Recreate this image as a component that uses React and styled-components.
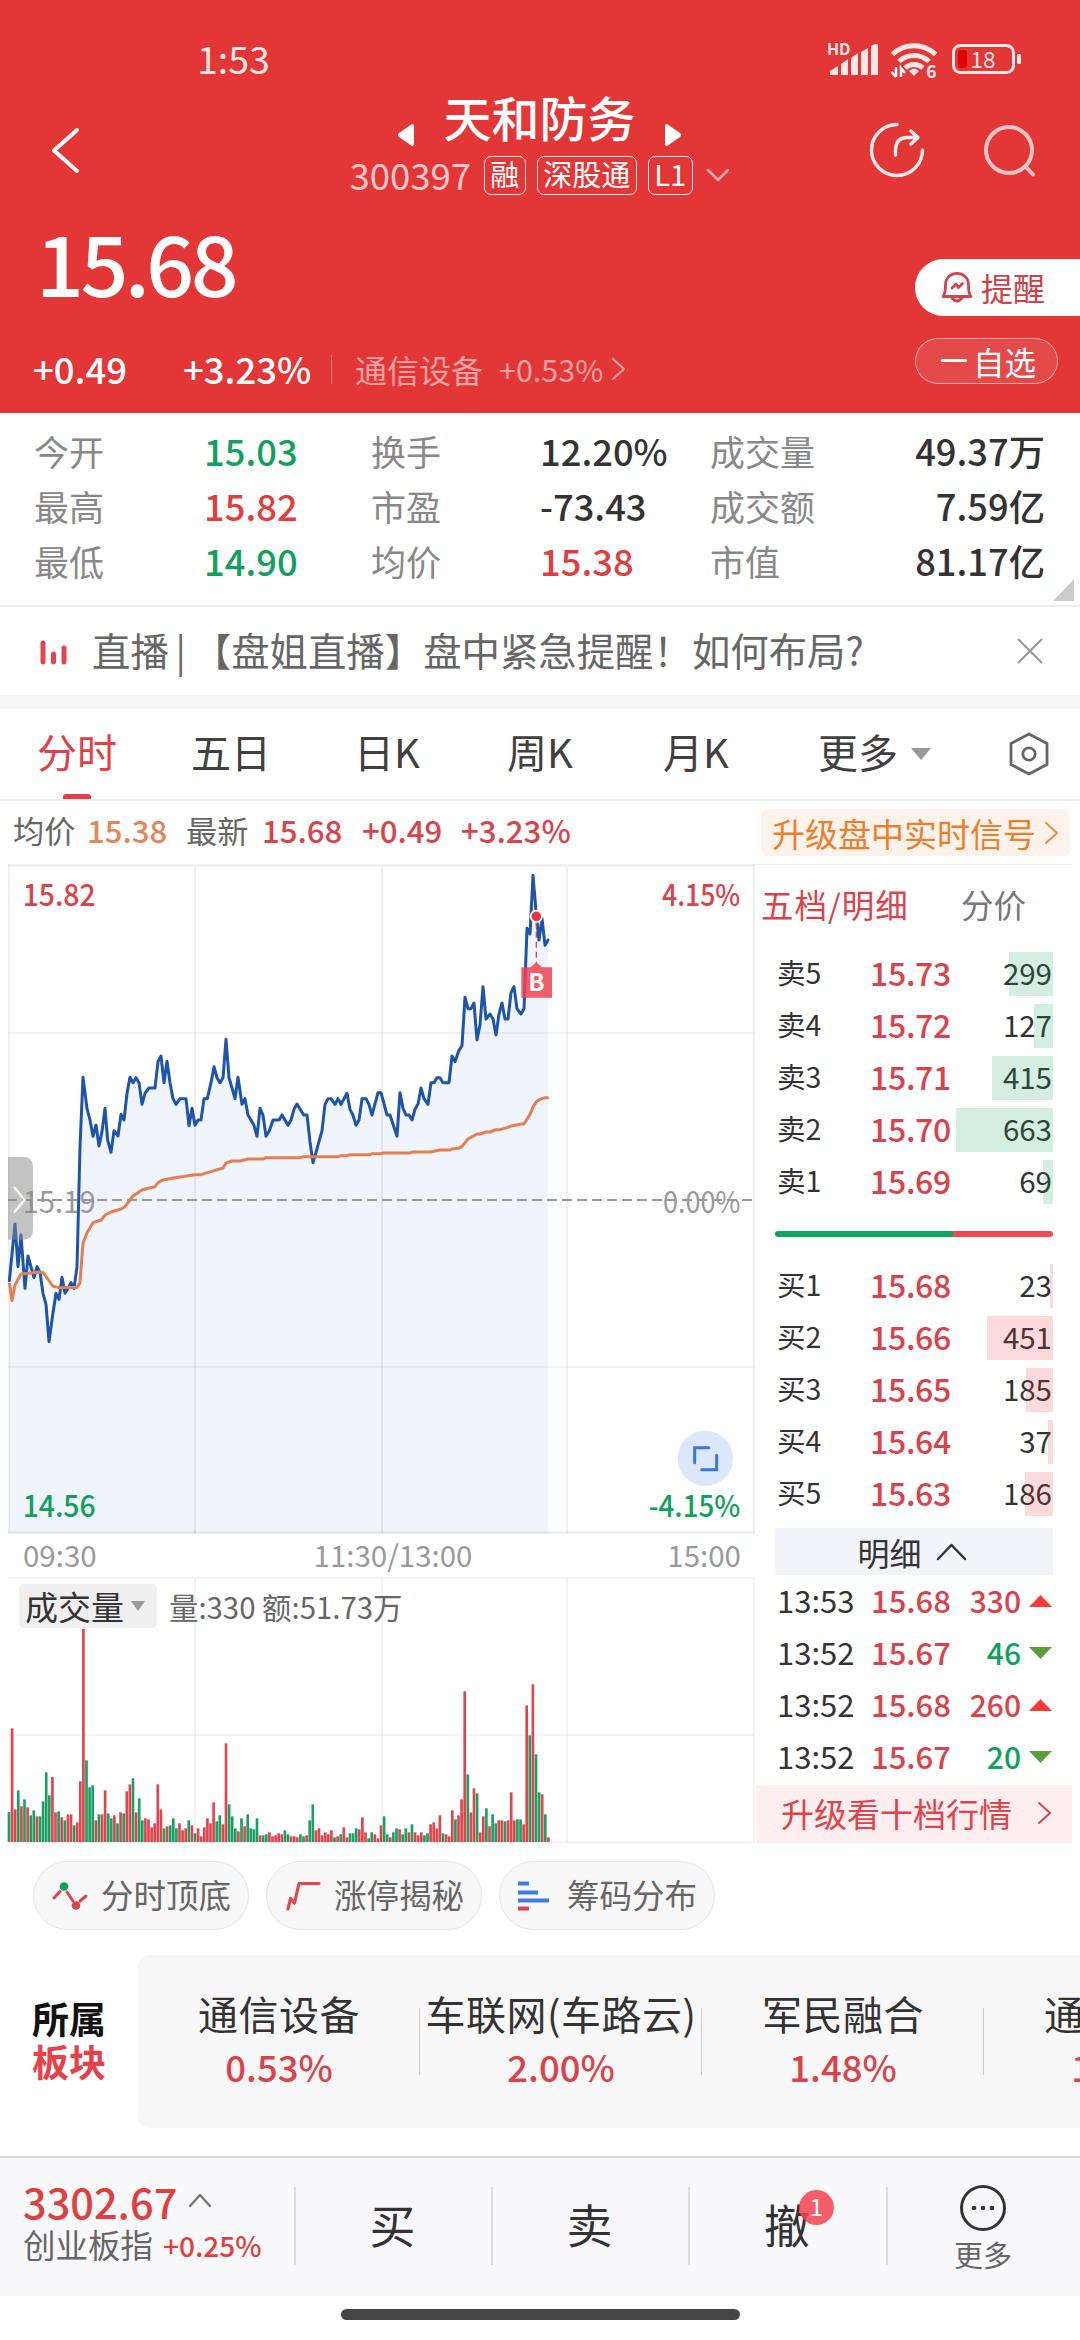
import React from 'react';
import styled, { createGlobalStyle, css } from 'styled-components';

const RED = '#d9434b';
const GREEN = '#12a05e';

const GlobalStyle = createGlobalStyle`
  * {
    box-sizing: border-box;
  }
  body {
    margin: 0;
    background: #fff;
    font-family: 'Noto Sans CJK SC', 'Noto Sans', sans-serif;
    color: #333;
    line-height: 1;
    white-space: nowrap;
  }
  svg {
    display: block;
    flex: none;
    overflow: visible;
  }
`;

const stats = [
  ['今开', '15.03', GREEN, '换手', '12.20%', '#333', '成交量', '49.37万'],
  ['最高', '15.82', '#e03f3f', '市盈', '-73.43', '#333', '成交额', '7.59亿'],
  ['最低', '14.90', GREEN, '均价', '15.38', '#e03f3f', '市值', '81.17亿'],
];

const asks = [
  ['卖5', '15.73', 299, 44],
  ['卖4', '15.72', 127, 19],
  ['卖3', '15.71', 415, 61],
  ['卖2', '15.70', 663, 97],
  ['卖1', '15.69', 69, 10],
];

const bids = [
  ['买1', '15.68', 23, 3],
  ['买2', '15.66', 451, 66],
  ['买3', '15.65', 185, 27],
  ['买4', '15.64', 37, 5],
  ['买5', '15.63', 186, 28],
];

const trades = [
  ['13:53', '15.68', 330, true],
  ['13:52', '15.67', 46, false],
  ['13:52', '15.68', 260, true],
  ['13:52', '15.67', 20, false],
];

const sectors = [
  ['通信设备', '0.53%'],
  ['车联网(车路云)', '2.00%'],
  ['军民融合', '1.48%'],
  ['通信服务', '1.12%'],
];

//Chart units: 3 units = 1px
const pricePoints =
  '28,1262 45,1092 54,1220 63,1125 75,1285 84,1188 102,1253 111,1220 120,1237 129,1300 138,1333 147,1445 158,1365 168,1300 177,1318 186,1252 195,1300 204,1285 213,1268 222,1285 231,1220 240,860 249,652 261,745 270,780 279,829 288,795 297,858 306,815 315,745 323,840 333,877 342,812 354,828 363,763 372,780 381,700 390,652 399,668 408,653 417,668 426,733 435,700 447,684 465,684 474,605 483,588 492,668 501,604 510,668 519,716 528,733 540,716 558,716 567,797 576,745 585,796 594,780 603,780 612,716 622,716 633,668 642,620 651,653 660,668 669,653 678,538 687,653 696,684 705,716 714,652 726,733 735,716 744,765 762,796 771,829 780,745 789,765 798,829 808,812 819,780 837,780 846,765 864,796 873,780 882,748 891,732 911,765 921,765 930,845 939,908 948,877 966,812 975,733 984,716 993,716 1005,733 1014,716 1023,733 1041,700 1050,748 1059,765 1068,796 1077,780 1086,716 1098,716 1107,733 1116,765 1134,698 1143,698 1161,765 1170,765 1191,829 1200,698 1209,745 1218,765 1227,765 1236,780 1245,748 1254,732 1263,684 1272,716 1284,733 1293,668 1302,668 1311,653 1320,653 1329,668 1347,668 1356,588 1365,605 1376,573 1386,557 1395,412 1404,446 1413,446 1422,429 1431,540 1440,495 1449,380 1458,477 1470,462 1479,477 1488,525 1497,462 1506,429 1515,477 1524,477 1533,398 1542,380 1551,446 1563,462 1572,446 1581,205 1590,222 1599,46 1609,165 1617,240 1626,175 1635,256 1644,240';
const averagePoints =
  '28,1268 36,1322 45,1275 63,1242 120,1236 130,1238 140,1252 158,1278 177,1283 231,1282 240,1268 249,1150 261,1118 279,1088 303,1080 318,1063 333,1056 363,1047 375,1040 399,1008 426,990 447,984 465,980 474,968 486,961 520,954 585,944 603,944 642,932 669,924 678,909 696,903 720,903 744,897 790,897 798,893 900,893 912,890 1014,890 1023,887 1041,887 1050,884 1110,884 1117,881 1143,881 1150,879 1230,879 1236,876 1293,876 1305,873 1320,870 1350,870 1356,867 1374,865 1386,859 1404,837 1431,822 1440,822 1458,816 1470,816 1488,809 1500,809 1524,802 1533,798 1563,792 1572,792 1590,763 1599,742 1609,725 1620,718 1635,713 1646,713';

//r = up minute, g = down minute, the number is the bar height
const volumes =
  'g90 r341 r98 g155 r107 g128 r104 g80 g95 r77 g77 g122 g209 g140 r195 r89 g92 r74 g65 r83 r83 g50 r59 r182 r639 g245 g164 g170 r65 g83 r83 r155 g86 g71 r80 g56 r89 g86 r152 r173 g191 r89 g131 g65 r71 r68 r44 r56 r173 r98 g41 r47 g50 g71 g41 r56 r35 r41 g65 r50 g26 r41 r17 r44 r71 r56 r119 g62 g80 r53 r296 g113 g77 g41 r32 g71 r47 g83 g41 g38 g71 r20 g20 g23 r29 r17 r20 r26 r23 g35 g23 r17 r17 r14 g23 g17 r20 g65 g113 r35 r41 r20 r29 r23 r35 g14 r17 g23 r44 r14 g26 g26 g41 r38 r74 r29 g11 g29 r23 r11 r50 g77 g23 r14 g29 g41 r38 g23 g41 r29 g53 r29 r20 r29 g20 g26 r53 r59 r41 r80 g26 r23 r17 r95 g68 r80 r128 r452 g203 r89 r161 g146 r29 r77 g101 r47 g83 g56 r65 r65 g62 r65 r149 r65 g68 g68 r53 r410 g320 r473 g263 g149 r143 g83 r14'.split(
    ' '
  );

const Chevron = ({ dir, w, h, color, weight }) => {
  const d = {
    left: `M${w - 2} 2 L2 ${h / 2} L${w - 2} ${h - 2}`,
    right: `M2 2 L${w - 2} ${h / 2} L2 ${h - 2}`,
    up: `M2 ${h - 2} L${w / 2} 2 L${w - 2} ${h - 2}`,
    down: `M2 2 L${w / 2} ${h - 2} L${w - 2} 2`,
  }[dir];
  return (
    <svg width={w} height={h} fill='none' stroke={color} strokeWidth={weight || 2}>
      <path d={d} strokeLinecap='round' strokeLinejoin='round' />
    </svg>
  );
};

const StatusIcons = () => (
  <svg width='196' height='40' viewBox='826 40 196 40' fill='#fff' fillOpacity='.88'>
    <text x='827' y='54.5' fontSize='16' fontWeight='700'>HD</text>
    <path d='M830 75v-4l8-5v9zM841 75V64l7-5v16zM851 75V58l7-5v22zM861 75V52l7-4v27zM871 75V46l4-2h3v31z' />
    <g fill='none' stroke='#fff' strokeOpacity='.88' strokeWidth='5'>
      <path d='M892.500 54.500a31 31 0 0 1 43 0M899 61.500a22 22 0 0 1 30 0M905 68a13 13 0 0 1 18 0' />
    </g>
    <path d='M914 76l-5-5q5-5 10 0z' />
    <path d='M896 67v10M891.500 72l4.500 5M901 77v-9l4 5' stroke='#fff' strokeWidth='2.500' fill='none' />
    <text x='926' y='77.500' fontSize='18' fontWeight='700'>6</text>
    <rect x='953.500' y='45.500' width='60' height='27' rx='7' fill='none' stroke='#fff' strokeOpacity='.88' strokeWidth='3' />
    <rect x='958' y='50' width='9' height='18' rx='3' fill='#e20000' fillOpacity='1' />
    <rect x='1017' y='54' width='4' height='10' rx='1.500' />
    <text x='970.500' y='67.500' fontSize='22.500'>18</text>
  </svg>
);

const ShareIcon = () => (
  <svg width='58' height='58' viewBox='-29 -29 58 58' fill='none' stroke='#fff' strokeOpacity='.9' strokeWidth='3.400' strokeLinecap='round'>
    <path d='M0 -25.500A25.500 25.500 0 1 0 25.500 0' />
    <path d='M-1.500 5V0Q-1.500 -12 10 -12.500H20M14 -19L21 -12.500L14 -6' strokeLinejoin='round' />
  </svg>
);

const SearchIcon = () => (
  <svg width='58' height='58' viewBox='-29 -29 58 58' fill='none' stroke='#f3c4c4' strokeWidth='4' strokeLinecap='round'>
    <circle cx='0' cy='0' r='23' />
    <path d='M17 17L24 24.500' />
  </svg>
);

const BellIcon = () => (
  <svg width='32' height='32' viewBox='0 0 32 32' fill='none' stroke='#d2434a' strokeWidth='2.800' strokeLinecap='round' strokeLinejoin='round'>
    <path d='M2 25.500C4 23 4.500 20 4.500 14C4.500 -1.500 27.500 -1.500 27.500 14C27.500 20 28 23 30 25.500Z' />
    <path d='M11 17l4-4 2.500 3.500 4-4' />
    <path d='M11 27q5 6 10 0' />
  </svg>
);

const GearIcon = () => (
  <svg width='42' height='44' viewBox='0 0 42 44' fill='none' stroke='#666' strokeWidth='2.800'>
    <path d='M21 2L39 11.500V32.500L21 42L3 32.500V11.500Z' strokeLinejoin='round' />
    <circle cx='21' cy='22' r='6.200' />
  </svg>
);

const PeakIcon = () => (
  <svg width='36' height='30' viewBox='0 0 36 30' fill='none' stroke={RED} strokeWidth='3'>
    <path d='M2 17L8 10.500M15 11L21 20M28 20L34 15' strokeLinecap='round' />
    <circle cx='12' cy='5.500' r='4.300' fill={GREEN} stroke='none' />
    <circle cx='24' cy='24.500' r='4.300' fill={RED} stroke='none' />
  </svg>
);

const LimitIcon = () => (
  <svg width='36' height='30' viewBox='0 0 36 30' fill='none' stroke='#e5444f' strokeWidth='3.200'>
    <path d='M3 28L5.500 17.500L9.500 22L14 2.500H34' strokeLinecap='round' strokeLinejoin='round' />
  </svg>
);

const ChipIcon = () => (
  <svg width='32' height='30' viewBox='0 0 32 30'>
    <path d='M0 2.500h11M0 11.500h20M0 19.500h31' stroke='#3f7be0' strokeWidth='4' />
    <path d='M0 27.500h11' stroke={RED} strokeWidth='4' />
  </svg>
);

const AxisText = ({ x, y, len, color, weight, children }) => (
  <text
    x={x}
    y={y}
    fontSize='90'
    fontWeight={weight || 500}
    fill={color}
    textLength={len}
    lengthAdjust='spacingAndGlyphs'
  >
    {children}
  </text>
);

const PriceChart = () => (
  <svg width='748' height='670' viewBox='24 12 2244 2010' fill='none'>
    <path d={`M28 2022L${pricePoints.replace(/ /g, 'L')}L1644 2022Z`} fill='#eff4fd' />
    <g stroke='#000' strokeOpacity='.07' strokeWidth='5'>
      <path d='M27 12V2020M585 20V2022M1146 20V2022M1701 20V2022M2262 12V2020' />
      <path d='M24 519H2262M24 1521H2262' />
      <path d='M24 16H2265M24 2017H2265' strokeWidth='7' />
    </g>
    <path d='M24 1020H2262' stroke='#999' strokeWidth='6' strokeDasharray='30 15' strokeDashoffset='3' />
    <AxisText x={68} y={1058} len={219} color='#999' weight={400}>15.19</AxisText>
    <AxisText x={1989} y={1058} len={232} color='#999' weight={400}>0.00%</AxisText>
    <polyline points={pricePoints} stroke='#1f54ab' strokeWidth='9' strokeLinejoin='round' strokeLinecap='round' />
    <polyline points={averagePoints} stroke='#e57f50' strokeWidth='9' strokeLinejoin='round' />
    <AxisText x={68} y={138} len={219} color={RED}>15.82</AxisText>
    <AxisText x={1986} y={138} len={235} color={RED}>4.15%</AxisText>
    <AxisText x={68} y={1970} len={219} color={GREEN}>14.56</AxisText>
    <AxisText x={1946} y={1970} len={275} color={GREEN}>-4.15%</AxisText>
    <path d='M1609 185V310' stroke={RED} strokeWidth='4' strokeDasharray='18 12' />
    <circle cx='1609' cy='169' r='17' fill='#ea3440' stroke='#fff' strokeWidth='5' />
    <path d='M1564 322H1592L1609 307L1626 322H1656V413H1564Z' fill='#ee4250' fillOpacity='.85' />
    <text x='1609' y='394' fontSize='72' fontWeight='700' textAnchor='middle' fill='#fff'>B</text>
    <circle cx='2116' cy='1795' r='83' fill='#dde7fb' />
    <path d='M2084 1808V1763H2126M2105 1829H2150V1786' stroke='#3b76da' strokeWidth='9' strokeLinecap='round' />
    <path d='M24 891H70Q99 891 99 920V1110Q99 1139 70 1139H24Z' fill='#888' fillOpacity='.5' />
    <path d='M44 983L74 1020L44 1055' stroke='#fff' strokeWidth='7' strokeLinecap='round' />
  </svg>
);

const VolumeChart = () => (
  <svg width='748' height='266' viewBox='24 681 2244 798' fill='none'>
    <g stroke='#000' strokeOpacity='.06' strokeWidth='5'>
      <path d='M585 684V1476M1146 684V1476M1701 684V1476M2262 684V1476' />
      <path d='M24 684H2265M24 1155H2262M24 1477H2265' />
    </g>
    {volumes.map((v, i) => {
      const h = Number(v.slice(1));
      return (
        <rect
          key={i}
          x={27 + i * 9.3 - 4}
          y={1476 - h}
          width='8'
          height={h}
          fill={v[0] === 'r' ? '#e0454e' : '#1ba064'}
        />
      );
    })}
  </svg>
);

const App = () => (
  <Page>
    <GlobalStyle />
    <Header>
      <StatusBar>
        <Clock>1:53</Clock>
        <StatusIcons />
      </StatusBar>
      <NavBar>
        <Chevron dir='left' w={27} h={45} color='#fff' weight={4} />
        <Titles>
          <TitleRow>
            <svg width='16' height='22' fill='#fff'>
              <path d='M14 0q2 0 2 2v18q0 2-2 2L1 13q-2-2 0-4z' />
            </svg>
            <Title>天和防务</Title>
            <svg width='16' height='22' fill='#fff'>
              <path d='M2 0q-2 0-2 2v18q0 2 2 2L15 13q2-2 0-4z' />
            </svg>
          </TitleRow>
          <CodeRow>
            <Code>300397</Code>
            <Tag>融</Tag>
            <Tag>深股通</Tag>
            <Tag>L1</Tag>
            <Chevron dir='down' w={24} h={14} color='#f5a9a9' weight={2.5} />
          </CodeRow>
        </Titles>
        <NavIcons>
          <ShareIcon />
          <SearchIcon />
        </NavIcons>
      </NavBar>
      <PriceRow>
        <BigPrice>15.68</BigPrice>
        <AlertButton>
          <BellIcon />
          提醒
        </AlertButton>
      </PriceRow>
      <ChangeRow>
        <Change $w={150}>+0.49</Change>
        <Change $w={146}>+3.23%</Change>
        <Industry>
          <span>通信设备</span>
          <IndustryRate>+0.53%</IndustryRate>
          <Chevron dir='right' w={15} h={24} color='#f5a3a3' />
        </Industry>
        <WatchButton>
          <Minus />
          自选
        </WatchButton>
      </ChangeRow>
    </Header>

    <Stats>
      {stats.map((s) => (
        <React.Fragment key={s[0]}>
          <StatLabel>{s[0]}</StatLabel>
          <StatValue $color={s[2]}>{s[1]}</StatValue>
          <StatLabel>{s[3]}</StatLabel>
          <StatValue $color={s[5]}>{s[4]}</StatValue>
          <StatLabel>{s[6]}</StatLabel>
          <StatValue $right>{s[7]}</StatValue>
        </React.Fragment>
      ))}
      <Corner />
    </Stats>

    <Banner>
      <svg width='28' height='22' stroke='#e5444f' strokeWidth='5' strokeLinecap='round'>
        <path d='M3 3V22M13.500 14V22M24 8V22' />
      </svg>
      <BannerText>
        直播<Bar>|</Bar>【盘姐直播】盘中紧急提醒！如何布局?
      </BannerText>
      <svg width='26' height='26' stroke='#999' strokeWidth='2.200'>
        <path d='M1 1L25 25M25 1L1 25' />
      </svg>
    </Banner>

    <Tabs>
      <Tab $active $w={154}>分时</Tab>
      <Tab $w={163}>五日</Tab>
      <Tab $w={153}>日K</Tab>
      <Tab $w={156}>周K</Tab>
      <Tab $w={155}>月K</Tab>
      <Tab $w={93}>更多</Tab>
      <Caret $w={20} $h={12} />
      <TabsEnd>
        <GearIcon />
      </TabsEnd>
    </Tabs>

    <InfoRow>
      <Info $w={74} $color='#666'>均价</Info>
      <Info $w={99} $color='#e0885a' $bold>15.38</Info>
      <Info $w={76} $color='#666'>最新</Info>
      <Info $w={100} $color={RED} $bold>15.68</Info>
      <Info $w={99} $color={RED} $bold>+0.49</Info>
      <Info $color={RED} $bold>+3.23%</Info>
      <SignalButton>
        升级盘中实时信号
        <Chevron dir='right' w={15} h={24} color='#ec8a45' />
      </SignalButton>
    </InfoRow>

    <Market>
      <Charts>
        <PriceChart />
        <Times>
          <span>09:30</span>
          <MidTime>11:30/13:00</MidTime>
          <span>15:00</span>
        </Times>
        <VolumeBox>
          <VolumeChart />
          <VolumeHead>
            <VolumeSelect>
              成交量
              <Caret $w={14} $h={10} />
            </VolumeSelect>
            量:330 额:51.73万
          </VolumeHead>
        </VolumeBox>
      </Charts>
      <Book>
        <BookTabs>
          <BookTab $active>五档/明细</BookTab>
          <BookTab>分价</BookTab>
        </BookTabs>
        <Levels>
          {asks.map(([name, price, vol, w]) => (
            <Level key={name}>
              <span>{name}</span>
              <LevelPrice>{price}</LevelPrice>
              <span>{vol}</span>
              <Depth $sell style={{ width: w }} />
            </Level>
          ))}
        </Levels>
        <Ratio />
        <Levels>
          {bids.map(([name, price, vol, w]) => (
            <Level key={name}>
              <span>{name}</span>
              <LevelPrice>{price}</LevelPrice>
              <span>{vol}</span>
              <Depth style={{ width: w }} />
            </Level>
          ))}
        </Levels>
        <DetailHead>
          明细
          <Chevron dir='up' w={31} h={18} color='#333' weight={2.5} />
        </DetailHead>
        {trades.map(([time, price, vol, up], i) => (
          <Trade key={i}>
            <TradeTime>{time}</TradeTime>
            <TradePrice>{price}</TradePrice>
            <TradeVolume $up={up}>{vol}</TradeVolume>
            <svg width='23' height='12' fill={up ? '#fb3a36' : '#5a9c3e'}>
              <path d={up ? 'M11.500 0L23 12H0Z' : 'M11.500 12L0 0H23Z'} />
            </svg>
          </Trade>
        ))}
        <Upgrade>
          升级看十档行情
          <Chevron dir='right' w={15} h={24} color={RED} />
        </Upgrade>
      </Book>
    </Market>

    <Pills>
      <Pill>
        <PeakIcon />
        <PillText>分时顶底</PillText>
      </Pill>
      <Pill>
        <LimitIcon />
        <PillText>涨停揭秘</PillText>
      </Pill>
      <Pill>
        <ChipIcon />
        <PillText>筹码分布</PillText>
      </Pill>
    </Pills>

    <SectorRow>
      <SectorLabel>
        所属
        <em>板块</em>
      </SectorLabel>
      <SectorCard>
        {sectors.map(([name, rate]) => (
          <Sector key={name}>
            <SectorName>{name}</SectorName>
            <SectorRate>{rate}</SectorRate>
          </Sector>
        ))}
      </SectorCard>
    </SectorRow>

    <Footer>
      <IndexBox>
        <IndexValue>
          3302.67
          <Chevron dir='up' w={24} h={15} color='#777' weight={2.5} />
        </IndexValue>
        <IndexName>
          创业板指
          <IndexRate>+0.25%</IndexRate>
        </IndexName>
      </IndexBox>
      <Action $w={197}>买</Action>
      <Action $w={197}>卖</Action>
      <Action $w={198}>
        撤<Badge>1</Badge>
      </Action>
      <More>
        <svg width='48' height='48' viewBox='-24 -24 48 48' fill='#333'>
          <circle r='21.500' fill='none' stroke='#333' strokeWidth='3' />
          <circle cx='-9' r='2.300' />
          <circle r='2.300' />
          <circle cx='9' r='2.300' />
        </svg>
        更多
      </More>
    </Footer>
    <HomeBar />
  </Page>
);

export default App;

const center = css`
  display: flex;
  align-items: center;
`;

const Page = styled.div`
  width: 1080px;
  height: 2340px;
  overflow: hidden;
  background: #fff;
`;
const Header = styled.header`
  height: 413px;
  background: #e33636;
  color: #fff;
`;
const StatusBar = styled.div`
  ${center}
  justify-content: space-between;
  height: 84px;
  padding: 36px 58px 0 197px;
`;
const Clock = styled.div`
  padding-bottom: 4px;
  font-size: 37.5px;
  opacity: 0.88;
`;
const NavBar = styled.div`
  ${center}
  justify-content: space-between;
  height: 132px;
  padding: 0 42px 0 52px;
`;
const Titles = styled.div`
  display: flex;
  flex-direction: column;
  width: 380px;
  margin: -12px 0 0 132px;
`;
const TitleRow = styled.div`
  display: flex;
  align-items: flex-end;
  justify-content: space-between;
  width: 284px;
  height: 62px;
  margin-left: 48px;
`;
const Title = styled.h1`
  margin: 0;
  padding-bottom: 6px;
  font-size: 48px;
  font-weight: 500;
`;
const CodeRow = styled.div`
  ${center}
  height: 58px;
`;
const Code = styled.div`
  width: 135px;
  color: #fbc9c9;
  font-size: 36.5px;
  line-height: 34px;
`;
const Tag = styled.span`
  height: 39px;
  margin-right: 11px;
  padding: 0 5.5px;
  border: 1.5px solid rgba(255, 255, 255, 0.85);
  border-radius: 7px;
  font-size: 29px;
  line-height: 33px;

  &:last-of-type {
    margin-right: 13px;
  }
`;
const NavIcons = styled.div`
  display: flex;
  gap: 54px;
`;
const PriceRow = styled.div`
  ${center}
  justify-content: space-between;
  height: 104px;
  padding-left: 36px;
`;
const BigPrice = styled.div`
  padding-bottom: 14px;
  font-size: 84px;
  font-weight: 500;
  letter-spacing: -3.5px;
`;
const AlertButton = styled.div`
  ${center}
  gap: 8px;
  width: 165px;
  height: 57px;
  margin-top: 38px;
  padding-left: 26px;
  border-radius: 29px 0 0 29px;
  background: #fff;
  color: #c9434a;
  font-size: 32px;
  line-height: 50px;
`;
const ChangeRow = styled.div`
  ${center}
  height: 84px;
  padding: 14px 22px 0 33px;
`;
const Change = styled.div`
  width: ${(p) => p.$w}px;
  font-size: 36.5px;
  font-weight: 500;
  line-height: 32px;
`;
const Industry = styled.div`
  ${center}
  height: 29px;
  margin-left: 2px;
  padding-left: 23px;
  border-left: 1.5px solid rgba(255, 255, 255, 0.35);
  color: #f5a3a3;
  font-size: 32px;
  line-height: 28px;
`;
const IndustryRate = styled.span`
  margin: 0 8px 0 16px;
  font-size: 30.5px;
`;
const WatchButton = styled.div`
  ${center}
  gap: 6px;
  width: 143px;
  height: 46px;
  margin: -17px 0 0 auto;
  padding-left: 25px;
  border: 1.5px solid rgba(255, 255, 255, 0.5);
  border-radius: 23px;
  background: rgba(255, 255, 255, 0.1);
  font-size: 31.5px;
  line-height: 38px;
`;
const Minus = styled.i`
  width: 26px;
  height: 3px;
  border-radius: 2px;
  background: #fff;
`;

const Stats = styled.section`
  position: relative;
  display: grid;
  grid-template-columns: 170px 167px 169px 170px 120px 1fr;
  grid-auto-rows: 55px;
  align-items: center;
  height: 194px;
  padding: 10px 35px 0 34px;
  border-bottom: 2px solid #ececec;
`;
const StatLabel = styled.span`
  color: #888;
  font-size: 35px;
`;
const StatValue = styled.span`
  color: ${(p) => p.$color || '#333'};
  font-size: 36.3px;
  font-weight: 500;
  text-align: ${(p) => (p.$right ? 'right' : 'left')};
`;
const Corner = styled.i`
  position: absolute;
  right: 6px;
  bottom: 4px;
  border-left: 21px solid transparent;
  border-bottom: 22px solid #ccc;
`;

const Banner = styled.section`
  ${center}
  height: 102px;
  padding: 0 37px 0 40px;
  border-bottom: 14px solid #f7f7f7;
`;
const BannerText = styled.div`
  flex: 1;
  padding: 0 0 5px 24px;
  color: #666;
  font-size: 38.4px;
  line-height: 38px;
`;
const Bar = styled.span`
  display: inline-block;
  width: 24px;
  text-align: center;
`;

const Tabs = styled.nav`
  ${center}
  height: 92px;
  padding: 0 30px 0 37px;
  border-bottom: 2px solid #ececec;
`;
const Tab = styled.div`
  position: relative;
  width: ${(p) => p.$w}px;
  height: 90px;
  color: ${(p) => (p.$active ? '#e33f48' : '#404040')};
  font-size: 40px;
  line-height: 85px;

  ${(p) =>
    p.$active &&
    css`
      &::after {
        content: '';
        position: absolute;
        left: 26px;
        bottom: 0;
        width: 28px;
        height: 5px;
        border-radius: 3px 3px 0 0;
        background: #e33f48;
      }
    `}
`;
const Caret = styled.i`
  width: ${(p) => p.$w}px;
  height: ${(p) => p.$h}px;
  background: #999;
  clip-path: polygon(0 0, 100% 0, 50% 100%);
`;
const TabsEnd = styled.div`
  margin-left: auto;
`;

const InfoRow = styled.div`
  ${center}
  height: 63px;
  padding: 0 10px 0 13px;
`;
const Info = styled.span`
  width: ${(p) => (p.$w ? p.$w + 'px' : 'auto')};
  padding-bottom: 6px;
  color: ${(p) => p.$color};
  font-size: 31.2px;
  font-weight: ${(p) => (p.$bold ? 500 : 400)};
  line-height: 28px;
`;
const SignalButton = styled.div`
  ${center}
  justify-content: space-between;
  width: 309px;
  height: 47px;
  margin-left: auto;
  padding: 0 11px;
  border-radius: 6px;
  background: #fef3ea;
  color: #ec7f2e;
  font-size: 33px;
  line-height: 40px;
`;

const Market = styled.section`
  display: flex;
  height: 979px;
`;
const Charts = styled.div`
  width: 756px;
  padding-left: 8px;
`;
const Times = styled.div`
  display: flex;
  justify-content: space-between;
  height: 43px;
  padding: 0 15px;
  color: #999;
  font-size: 29.5px;
  line-height: 41px;
`;
const MidTime = styled.span`
  padding-left: 22px;
`;
const VolumeBox = styled.div`
  position: relative;
`;
const VolumeHead = styled.div`
  ${center}
  position: absolute;
  left: 11px;
  top: 7px;
  height: 44px;
  color: #666;
  font-size: 29.4px;
  line-height: 40px;
`;
const VolumeSelect = styled.div`
  ${center}
  gap: 7px;
  width: 138px;
  height: 44px;
  margin-right: 12px;
  padding-left: 6px;
  border-radius: 5px;
  background: #efefef;
  color: #333;
  font-size: 33px;
`;

const Book = styled.div`
  width: 316px;
  border-top: 1px solid #ececec;
  border-bottom: 1px solid #ececec;
`;
const BookTabs = styled.div`
  ${center}
  justify-content: space-between;
  height: 83px;
  padding: 0 46px 4px 5px;
`;
const BookTab = styled.span`
  color: ${(p) => (p.$active ? RED : '#777')};
  font-size: 32.5px;
  letter-spacing: ${(p) => (p.$active ? '1px' : 0)};
`;
const Levels = styled.div`
  padding: 0 19px;
`;
const Level = styled.div`
  position: relative;
  display: grid;
  grid-template-columns: 93px 90px 1fr;
  height: 44px;
  margin: 4px 0 8px;
  padding: 0 1px 0 2px;
  font-size: 29.5px;
  line-height: 40px;

  span:first-child {
    font-size: 28.5px;
  }
  span:last-of-type {
    text-align: right;
  }
`;
const LevelPrice = styled.span`
  color: ${RED};
  font-size: 32px;
  font-weight: 500;
  letter-spacing: -0.3px;
`;
const Depth = styled.i`
  position: absolute;
  right: 0;
  top: 0;
  height: 44px;
  background: ${(p) => (p.$sell ? 'rgba(14, 160, 90, 0.18)' : 'rgba(235, 50, 60, 0.18)')};
`;
const Ratio = styled.div`
  width: 278px;
  height: 6px;
  margin: 27px 19px;
  border-radius: 3px;
  background: linear-gradient(to right, #12a562 178px, #ee4b50 178px);
`;
const DetailHead = styled.div`
  ${center}
  justify-content: center;
  gap: 14px;
  width: 278px;
  height: 47px;
  margin: 12px 19px 0;
  padding-right: 4px;
  background: #f3f4f9;
  font-size: 32px;
  line-height: 40px;
`;
const Trade = styled.div`
  ${center}
  height: 52px;
  padding: 0 20px 0 21px;
  font-size: 31px;
  line-height: 46px;
`;
const TradeTime = styled.span`
  width: 94px;
  padding-bottom: 2px;
`;
const TradePrice = styled.span`
  width: 80px;
  padding-bottom: 2px;
  color: ${RED};
  font-weight: 450;
`;
const TradeVolume = styled.span`
  flex: 1;
  padding: 0 8px 2px 0;
  color: ${(p) => (p.$up ? RED : GREEN)};
  font-size: 30px;
  font-weight: 500;
  text-align: right;
`;
const Upgrade = styled.div`
  ${center}
  justify-content: space-between;
  height: 57px;
  margin-top: 2px;
  padding: 0 20px 0 25px;
  background: #feeeef;
  color: #e0434a;
  font-size: 33px;
  line-height: 49px;

  svg {
    margin-top: -1px;
  }
`;

const Pills = styled.div`
  display: flex;
  gap: 17px;
  padding: 18px 33px 25px;
`;
const Pill = styled.div`
  ${center}
  width: 216px;
  height: 69px;
  padding-left: 18px;
  border: 1.5px solid #e5e5e5;
  border-radius: 35px;
  background: #f7f7f7;
`;
const PillText = styled.span`
  margin-left: auto;
  padding: 0 17px 3px 0;
  color: #666;
  font-size: 32.5px;
  line-height: 60px;
`;

const SectorRow = styled.section`
  display: flex;
  height: 173px;
`;
const SectorLabel = styled.div`
  width: 138px;
  padding: 42px 0 0 32px;
  color: #111;
  font-size: 37px;
  font-weight: 700;
  line-height: 43px;

  em {
    display: block;
    color: #e8404a;
    font-style: normal;
  }
`;
const SectorCard = styled.div`
  display: flex;
  flex: 1;
  overflow: hidden;
  border-radius: 12px 0 0 12px;
  background: #f7f7f7;
`;
const Sector = styled.div`
  position: relative;
  flex: none;
  width: 282px;
  padding-top: 38px;
  text-align: center;

  &::after {
    content: '';
    position: absolute;
    right: 0;
    top: 53px;
    width: 1px;
    height: 67px;
    background: #ccc;
  }
`;
const SectorName = styled.div`
  font-size: 40px;
  letter-spacing: 0.5px;
`;
const SectorRate = styled.div`
  margin-top: 16px;
  color: ${RED};
  font-size: 36.5px;
  font-weight: 500;
`;

const Footer = styled.footer`
  display: flex;
  height: 140px;
  margin-top: 28px;
  border-top: 2px solid #d5d6da;
  background: #f9f9fb;
`;
const IndexBox = styled.div`
  width: 294px;
  padding: 23px 0 0 23px;
`;
const IndexValue = styled.div`
  ${center}
  gap: 11px;
  color: #e03f3f;
  font-size: 41.5px;
  font-weight: 500;

  svg {
    margin-top: -2px;
  }
`;
const IndexName = styled.div`
  ${center}
  gap: 10px;
  margin-top: 5px;
  color: #666;
  font-size: 32.5px;
`;
const IndexRate = styled.span`
  margin-top: 2px;
  color: #e03f3f;
  font-size: 28px;
  font-weight: 500;
`;
const Action = styled.div`
  position: relative;
  width: ${(p) => p.$w}px;
  font-size: 46px;
  line-height: 130px;
  text-align: center;

  &::before,
  &:nth-of-type(4)::after {
    content: '';
    position: absolute;
    left: 0;
    top: 29px;
    width: 2px;
    height: 78px;
    background: #dcdce0;
  }
  &:nth-of-type(4)::after {
    left: auto;
    right: -2px;
  }
`;
const Badge = styled.span`
  position: absolute;
  left: 111px;
  top: 32px;
  width: 35px;
  height: 35px;
  border-radius: 50%;
  background: rgba(244, 67, 78, 0.85);
  color: #fff;
  font-size: 24px;
  line-height: 32px;
`;
const More = styled.div`
  display: flex;
  flex: 1;
  flex-direction: column;
  align-items: center;
  gap: 8px;
  padding-top: 26px;
  color: #666;
  font-size: 29px;
`;
const HomeBar = styled.div`
  width: 399px;
  height: 11px;
  margin: 13px auto 0;
  border-radius: 6px;
  background: #464646;
`;
